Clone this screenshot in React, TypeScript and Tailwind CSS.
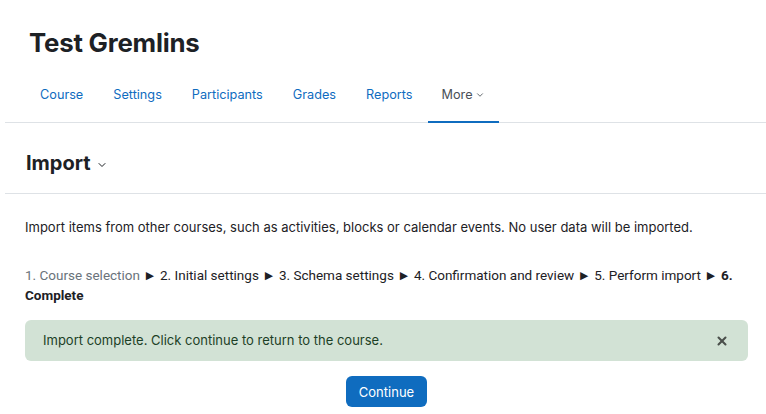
import { ChevronDown, X } from 'lucide-react'

const tabs = ['Course', 'Settings', 'Participants', 'Grades', 'Reports']

export default function App() {
  return (
    <div className="min-h-[414px] bg-white font-['Inter','Liberation_Sans',sans-serif] text-[#1d2125]">
      <div className="pl-[5px]">
        <h1 className="pl-6 pt-[27px] text-[25.8px] font-bold leading-[32px] tracking-[-0.2px]">Test Gremlins</h1>

        <nav className="mt-[18px] flex border-b border-[#dee2e6] pl-[20px] text-[12.7px]">
          {tabs.map((t) => (
            <a key={t} className="px-[15px] pb-[17px] pt-[8px] leading-[20px] text-[#0f6cbf]">
              {t}
            </a>
          ))}
          <a className="-mb-px flex items-center gap-[2px] border-b-2 border-[#0f6cbf] px-[14px] pb-[16px] pt-[8px] leading-[20px] text-[#495057]">
            More
            <ChevronDown size={10} strokeWidth={2} />
          </a>
        </nav>

        <div className="flex items-center gap-[5px] border-b border-[#dee2e6] pb-[15px] pl-[21px] pt-[25px]">
          <h2 className="text-[20px] font-bold leading-[30px]">Import</h2>
          <ChevronDown size={12} strokeWidth={2} className="mt-[3px]" />
        </div>
      </div>

      <div className="pl-[25px] pr-[18px] text-[13px] leading-[20px]">
        <p className="pt-[23px]">
          Import items from other courses, such as activities, blocks or calendar events. No user data will be imported.
        </p>

        <p className="mt-[28px] font-['Roboto','Liberation_Sans',sans-serif] text-[13.5px]">
          <span className="text-[#6a737b]">1. Course selection</span> ► 2. Initial settings ► 3. Schema settings ► 4.
          Confirmation and review ► 5. Perform import ► <strong>6. Complete</strong>
        </p>

        <div className="mt-[15px] flex items-center justify-between rounded-[6px] bg-[#d2e2d5] py-[10px] pl-[18px] pr-[19px] leading-[21px] text-[#1c3f26]">
          <span>Import complete. Click continue to return to the course.</span>
          <X size={14} strokeWidth={3.5} className="text-[#4a4f4b]" />
        </div>

        <div className="mt-[15px] flex justify-center">
          <button className="h-[31px] rounded-[6px] bg-[#0f6cbf] px-[13px] text-[13px] leading-[20px] text-white">
            Continue
          </button>
        </div>
      </div>
    </div>
  )
}
